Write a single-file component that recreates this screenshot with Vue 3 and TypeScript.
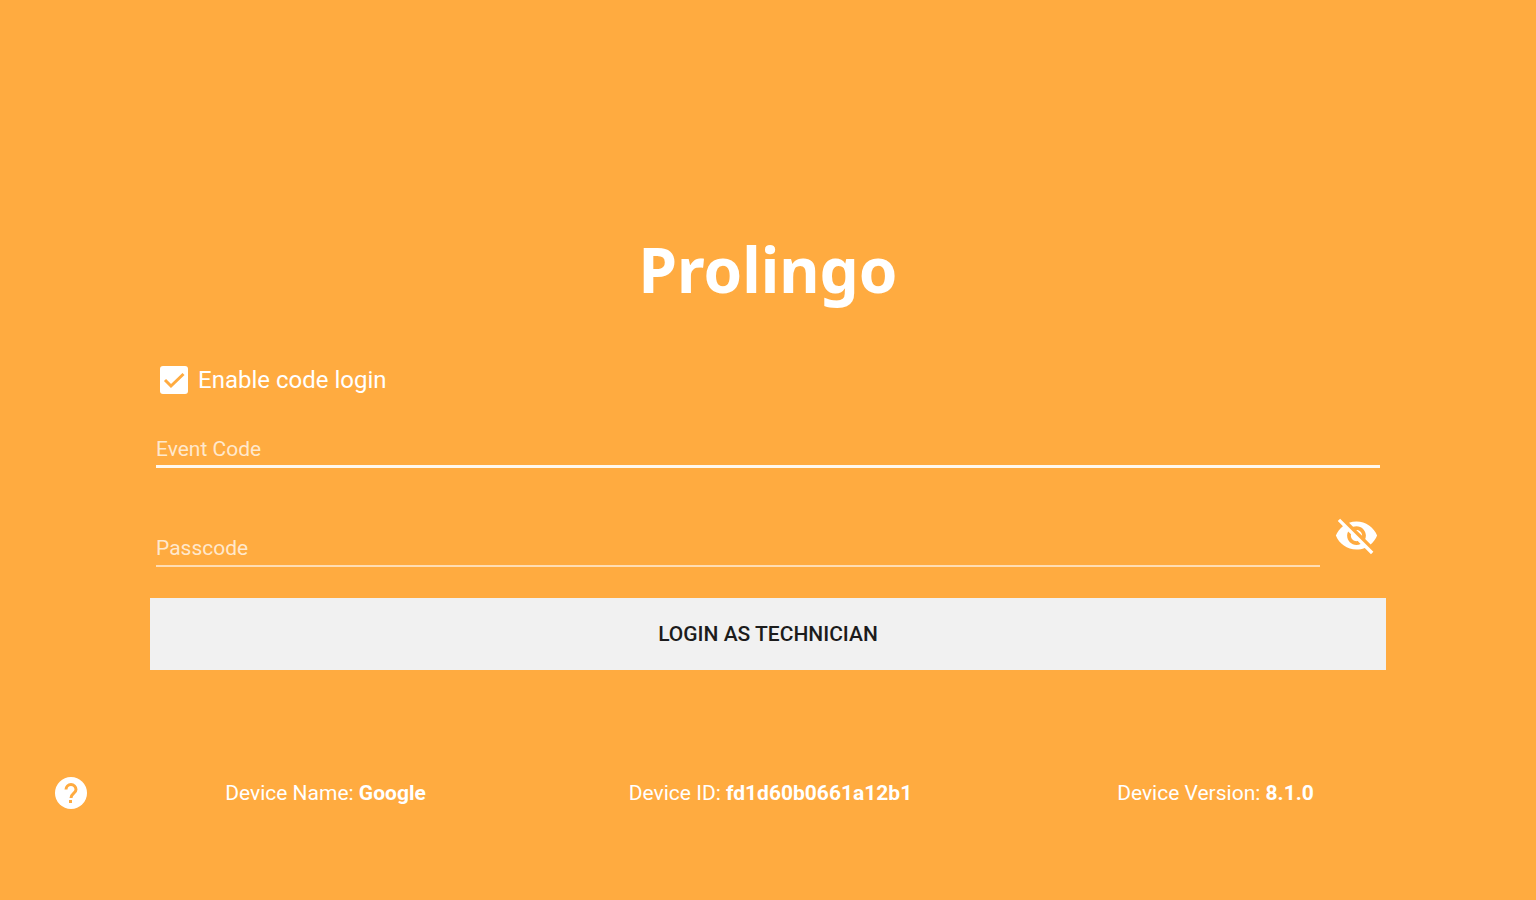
<script setup lang="ts">
import { ref } from 'vue'

interface DeviceFact {
  label: string
  value: string
}

const codeLogin = ref(true)
const eventCode = ref('')
const passcode = ref('')
const passcodeVisible = ref(false)

const facts: DeviceFact[] = [
  { label: 'Device Name:', value: 'Google' },
  { label: 'Device ID:', value: 'fd1d60b0661a12b1' },
  { label: 'Device Version:', value: '8.1.0' },
]
</script>

<template>
  <div class="screen">
    <main class="login">
      <h1 class="brand">Prolingo</h1>
      <form class="form" @submit.prevent>
        <label class="toggle">
          <input v-model="codeLogin" class="box" type="checkbox" />
          <svg class="tick" viewBox="0 0 28 28" aria-hidden="true">
            <rect v-if="codeLogin" width="28" height="28" rx="3" fill="currentColor" />
            <rect v-else x="2" y="2" width="24" height="24" rx="2" fill="none" stroke="currentColor" stroke-width="3" />
            <path v-if="codeLogin" d="M5 14l6 6L23.500 8" fill="none" stroke="#ffab40" stroke-width="3" />
          </svg>
          <span>Enable code login</span>
        </label>

        <input v-model="eventCode" class="field active" type="text" placeholder="Event Code" aria-label="Event Code" />

        <div class="secret">
          <input
            v-model="passcode"
            class="field"
            :type="passcodeVisible ? 'text' : 'password'"
            placeholder="Passcode"
            aria-label="Passcode"
          />
          <button class="icon-button eye" type="button" aria-label="Show passcode" @click="passcodeVisible = !passcodeVisible">
            <svg viewBox="0 0 24 24" aria-hidden="true">
              <path
                fill="currentColor"
                d="M12 7c2.76 0 5 2.24 5 5 0 .65-.13 1.26-.36 1.83l2.92 2.92c1.51-1.26 2.7-2.89 3.43-4.75-1.73-4.39-6-7.5-11-7.5-1.4 0-2.74.25-3.98.7l2.16 2.16C10.74 7.13 11.35 7 12 7zM2 4.27l2.28 2.28.46.46C3.08 8.3 1.78 10.02 1 12c1.73 4.39 6 7.5 11 7.5 1.55 0 3.03-.3 4.38-.84l.42.42L19.73 22 21 20.73 3.27 3 2 4.27zM7.53 9.8l1.55 1.55c-.05.21-.08.43-.08.65 0 1.66 1.34 3 3 3 .22 0 .44-.03.65-.08l1.55 1.55c-.67.33-1.41.53-2.2.53-2.76 0-5-2.24-5-5 0-.79.2-1.53.53-2.2zm4.31-.78l3.15 3.15.02-.16c0-1.66-1.34-3-3-3l-.17.01z"
              />
            </svg>
          </button>
        </div>

        <button class="submit" type="submit">LOGIN AS TECHNICIAN</button>
      </form>
    </main>

    <footer class="footer">
      <button class="icon-button help" type="button" aria-label="Help">
        <svg viewBox="0 0 32 32" aria-hidden="true">
          <circle cx="16" cy="16" r="16" fill="currentColor" />
          <path d="M11 12.5a5 5 0 0 1 10 0c0 4-5 4-5 8.500" fill="none" stroke="#ffab40" stroke-width="3" />
          <rect x="14" y="23" width="3" height="3" fill="#ffab40" />
        </svg>
      </button>
      <div class="facts">
        <p v-for="fact in facts" :key="fact.label" class="fact">
          {{ fact.label }} <strong>{{ fact.value }}</strong>
        </p>
      </div>
    </footer>
  </div>
</template>

<style>
body {
  margin: 0;
  background: #ffab40;
}
</style>

<style scoped>
.screen {
  box-sizing: border-box;
  min-height: 100vh;
  padding-top: 229px;
  background: #ffab40;
  color: #fff;
  font-family: Roboto, "Liberation Sans", sans-serif;
}
.login {
  padding: 0 150px;
}
.brand {
  margin: 0;
  font: 700 62px/80px "Noto Sans", "Open Sans", sans-serif;
  text-align: center;
}
.form {
  display: flex;
  flex-direction: column;
}
.toggle {
  position: relative;
  display: flex;
  align-items: center;
  align-self: flex-start;
  gap: 10px;
  margin: 55px 0 0 10px;
  font-size: 24px;
  line-height: 32px;
}
.box {
  position: absolute;
  width: 28px;
  height: 28px;
  margin: 0;
  opacity: 0;
}
.tick {
  width: 28px;
  height: 28px;
}
.field {
  box-sizing: border-box;
  height: 36px;
  margin: 0 6px;
  padding: 0;
  border: 0;
  border-bottom: 2px solid #ffddb3;
  border-radius: 0;
  outline: 0;
  background: transparent;
  color: #fff;
  font: 21px/32px Roboto, "Liberation Sans", sans-serif;
}
.field::placeholder {
  color: #ffe8cc;
  opacity: 1;
}
.field.active {
  margin-top: 36px;
  border-bottom: 3px solid #fff8ee;
}
.secret {
  display: flex;
  align-items: flex-end;
  margin-top: 45px;
}
.secret .field {
  flex: 1;
  min-width: 0;
  margin-right: 14px;
}
.icon-button {
  display: block;
  flex: none;
  padding: 0;
  border: 0;
  background: none;
  color: #fff;
  cursor: pointer;
}
.icon-button svg {
  display: block;
  width: 100%;
}
.eye {
  width: 45px;
  margin: 0 7px 9px 0;
}
.submit {
  height: 72px;
  margin-top: 31px;
  border: 0;
  background: #f1f1f1;
  color: #1c1c1c;
  font: 500 21px/32px Roboto, "Liberation Sans", sans-serif;
  cursor: pointer;
}
.footer {
  display: flex;
  align-items: center;
  margin-top: 107px;
  padding: 0 98px 0 55px;
}
.help {
  width: 32px;
}
.facts {
  display: grid;
  flex: 1;
  grid-template-columns: repeat(3, 1fr);
  margin-left: 16px;
}
.fact {
  margin: 0;
  font-size: 21px;
  line-height: 32px;
  text-align: center;
}
</style>
